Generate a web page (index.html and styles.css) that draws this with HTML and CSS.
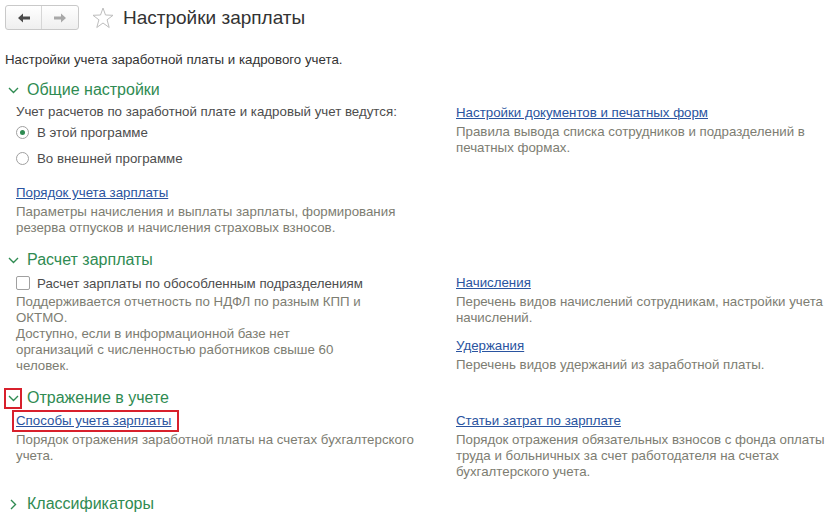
FILE: index.html
```html
<!DOCTYPE html>
<html lang="ru">
<head>
    <meta charset="UTF-8">
    <title>Настройки зарплаты</title>
    <link rel="stylesheet" href="styles.css">
</head>
<body>
<header class="topbar">
    <div class="nav">
        <button class="nav-btn back" type="button">
            <svg width="12" height="10" viewBox="0 0 12 10"><path d="M0 5 L5 0.5 V3.5 H12 V6.5 H5 V9.5 Z"/></svg>
        </button>
        <button class="nav-btn fwd" type="button">
            <svg width="12" height="10" viewBox="0 0 12 10"><path d="M12 5 L7 0.5 V3.5 H0 V6.5 H7 V9.5 Z"/></svg>
        </button>
    </div>
    <svg class="star" width="22" height="22" viewBox="0 0 22 22">
        <polygon points="11,1 13.5,8 21,8.3 15.1,12.8 17.2,20.5 11,16 4.8,20.5 6.9,12.8 1,8.3 8.5,8"/>
    </svg>
    <h1 class="title">Настройки зарплаты</h1>
</header>

<p class="intro">Настройки учета заработной платы и кадрового учета.</p>

<section class="group">
    <h2 class="group-title">
        <span class="toggle"><svg width="11" height="7" viewBox="0 0 11 7"><polyline points="1,1 5.5,5.5 10,1"/></svg></span>
        Общие настройки
    </h2>
    <div class="group-body">
        <div class="col">
            <div class="line">Учет расчетов по заработной плате и кадровый учет ведутся:</div>
            <label class="option"><span class="radio checked"></span>В этой программе</label>
            <label class="option second"><span class="radio"></span>Во внешней программе</label>
            <div class="item spaced">
                <a class="link" href="#">Порядок учета зарплаты</a>
                <p class="desc">Параметры начисления и выплаты зарплаты, формирования<br>резерва отпусков и начисления страховых взносов.</p>
            </div>
        </div>
        <div class="col">
            <div class="item">
                <a class="link" href="#">Настройки документов и печатных форм</a>
                <p class="desc">Правила вывода списка сотрудников и подразделений в<br>печатных формах.</p>
            </div>
        </div>
    </div>
</section>

<section class="group">
    <h2 class="group-title">
        <span class="toggle"><svg width="11" height="7" viewBox="0 0 11 7"><polyline points="1,1 5.5,5.5 10,1"/></svg></span>
        Расчет зарплаты
    </h2>
    <div class="group-body">
        <div class="col">
            <label class="option"><span class="checkbox"></span>Расчет зарплаты по обособленным подразделениям</label>
            <p class="desc">Поддерживается отчетность по НДФЛ по разным КПП и<br>ОКТМО.<br>Доступно, если в информационной базе нет<br>организаций с численностью работников свыше 60<br>человек.</p>
        </div>
        <div class="col">
            <div class="item">
                <a class="link" href="#">Начисления</a>
                <p class="desc">Перечень видов начислений сотрудникам, настройки учета<br>начислений.</p>
            </div>
            <div class="item next">
                <a class="link" href="#">Удержания</a>
                <p class="desc">Перечень видов удержаний из заработной платы.</p>
            </div>
        </div>
    </div>
</section>

<section class="group">
    <h2 class="group-title">
        <span class="toggle marked"><svg width="11" height="7" viewBox="0 0 11 7"><polyline points="1,1 5.5,5.5 10,1"/></svg></span>
        Отражение в учете
    </h2>
    <div class="group-body">
        <div class="col">
            <div class="item">
                <span class="marked-link"><a class="link" href="#">Способы учета зарплаты</a></span>
                <p class="desc">Порядок отражения заработной платы на счетах бухгалтерского<br>учета.</p>
            </div>
        </div>
        <div class="col">
            <div class="item">
                <a class="link" href="#">Статьи затрат по зарплате</a>
                <p class="desc">Порядок отражения обязательных взносов с фонда оплаты<br>труда и больничных за счет работодателя на счетах<br>бухгалтерского учета.</p>
            </div>
        </div>
    </div>
</section>

<section class="group">
    <h2 class="group-title">
        <span class="toggle"><svg width="7" height="11" viewBox="0 0 7 11"><polyline points="1,1 5.5,5.5 1,10"/></svg></span>
        Классификаторы
    </h2>
</section>
</body>
</html>
```

FILE: styles.css
```css
body {
    margin: 0;
    font-family: "Liberation Sans", Arial, sans-serif;
    font-size: 13.3px;
    color: #4d4d4d;
    background-color: #ffffff;
}

.topbar {
    display: flex;
    align-items: center;
    padding: 5px 5px 0;
    height: 25px;
}

.nav {
    display: flex;
    height: 25px;
    border: 1px solid #c9c9c9;
    border-radius: 3px;
    box-sizing: border-box;
    background: linear-gradient(#ffffff, #efefef);
}

.nav-btn {
    width: 36px;
    height: 23px;
    padding: 0;
    border: none;
    background: transparent;
    display: flex;
    align-items: center;
    justify-content: center;
}

.nav-btn.back {
    border-right: 1px solid #d6d6d6;
}

.nav-btn.back svg {
    fill: #4a4a4a;
}

.nav-btn.fwd svg {
    fill: #a8a8a8;
}

.star {
    margin-left: 13px;
    fill: none;
    stroke: #bdbdbd;
    stroke-width: 1;
}

.title {
    margin: 0 0 0 9px;
    font-size: 19px;
    font-weight: normal;
    color: #333333;
    line-height: 24px;
}

.intro {
    margin: 21px 0 0 5px;
    line-height: 18px;
    color: #333333;
}

.group {
    margin-top: 12px;
}

.group:first-of-type {
    margin-top: 9px;
}

.group-title {
    display: flex;
    align-items: center;
    height: 24px;
    margin: 0;
    font-size: 16px;
    font-weight: normal;
    color: #2f8b52;
}

.toggle {
    width: 18px;
    height: 21px;
    margin: 0 5px 0 4px;
    display: flex;
    align-items: center;
    justify-content: center;
    box-sizing: border-box;
}

.toggle svg {
    fill: none;
    stroke: #2f8b52;
    stroke-width: 1.4;
}

.toggle.marked {
    outline: 2px solid #d8202c;
    outline-offset: -2px;
}

.group-body {
    display: grid;
    grid-template-columns: 440px 1fr;
    padding-left: 16px;
}

.col {
    display: flex;
    flex-direction: column;
    align-items: flex-start;
}

.line {
    line-height: 18px;
    margin-top: 1px;
}

.option {
    display: flex;
    align-items: center;
    height: 22px;
    color: #4d4d4d;
}

.option.second {
    margin-top: 4px;
}

.radio {
    width: 13px;
    height: 13px;
    border: 1px solid #a0a0a0;
    border-radius: 50%;
    margin-right: 8px;
    box-sizing: border-box;
    display: flex;
    align-items: center;
    justify-content: center;
}

.radio.checked::after {
    content: "";
    width: 5px;
    height: 5px;
    border-radius: 50%;
    background-color: #2f8b52;
}

.checkbox {
    width: 14px;
    height: 14px;
    border: 1px solid #a0a0a0;
    border-radius: 2px;
    margin-right: 7px;
    box-sizing: border-box;
}

.item {
    display: flex;
    flex-direction: column;
    align-items: flex-start;
}

.item.spaced {
    margin-top: 13px;
}

.item.next {
    margin-top: 9px;
}

.link {
    line-height: 22px;
    color: #2a54a0;
    text-decoration: underline;
}

.marked-link {
    display: inline-block;
    margin: 0 0 0 -4px;
    padding: 0 6px 0 2px;
    border: 2px solid #d8202c;
    line-height: 18px;
}

.marked-link .link {
    line-height: 18px;
}

.desc {
    margin: 0;
    line-height: 16px;
    color: #7d7d72;
}
```
